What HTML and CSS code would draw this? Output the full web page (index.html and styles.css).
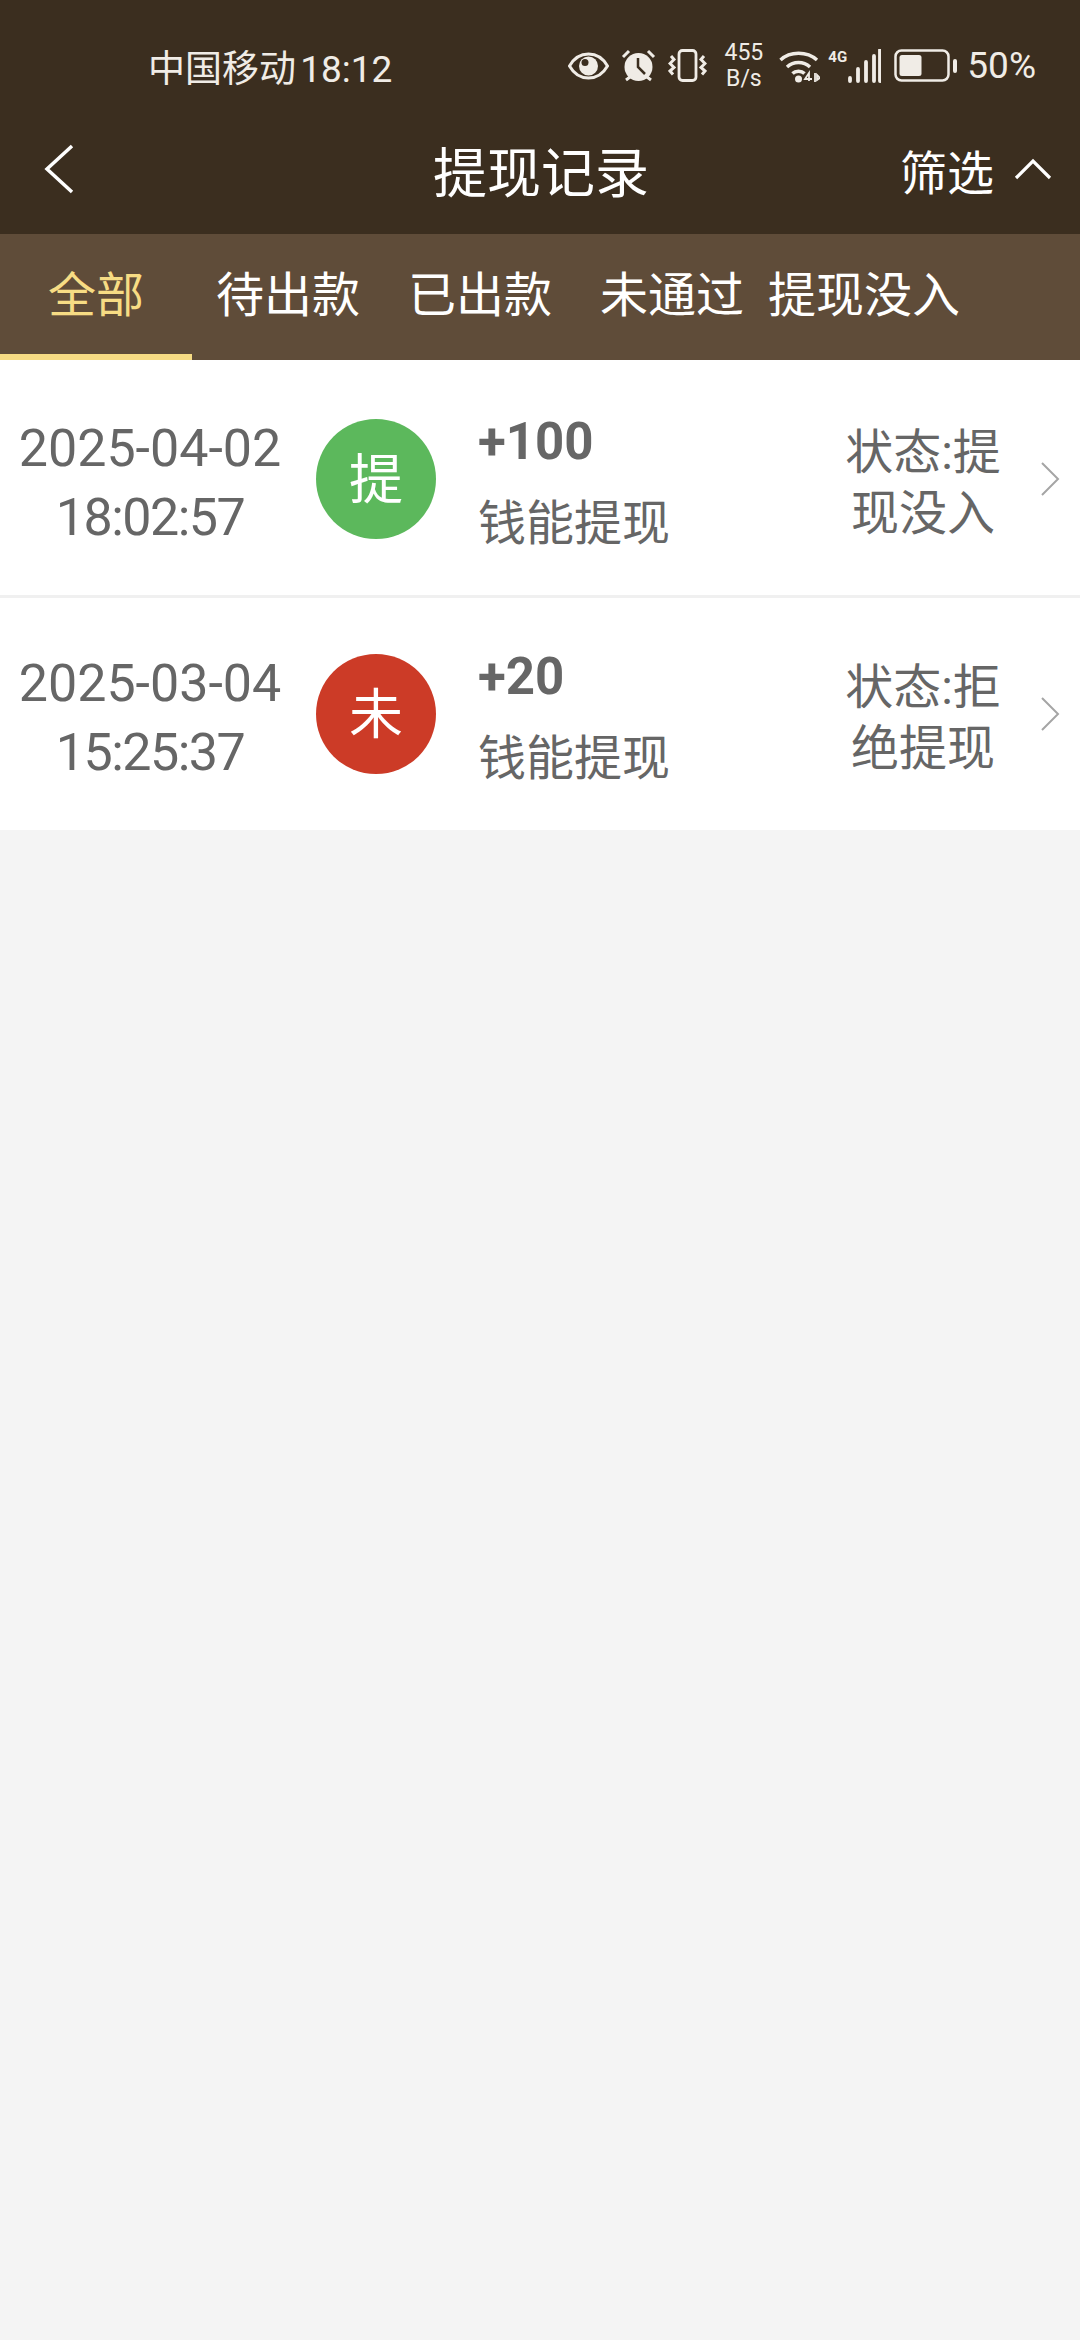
FILE: index.html
```html
<!DOCTYPE html>
<html lang="zh-CN">
<head>
  <meta charset="UTF-8">
  <title>提现记录</title>
  <link rel="stylesheet" href="styles.css">
</head>
<body>

  <!-- 顶部 -->
  <div class="header">
    <div class="statusbar">
      <span class="carrier">中国移动 18:12</span>
      <div class="status-icons">
        <svg class="ic-eye" width="41" height="28" viewBox="0 0 41 28">
          <path d="M1.500 14C6 6 13 2 20.500 2S35 6 39.500 14C35 22 28 26 20.500 26S6 22 1.500 14Z" fill="none" stroke="#f0ece6" stroke-width="3"/>
          <circle cx="20.500" cy="14" r="9.500" fill="#f0ece6"/>
          <circle cx="17" cy="10.500" r="3.500" fill="#3b2e1f"/>
        </svg>
        <svg class="ic-alarm" width="35" height="33" viewBox="0 0 35 33">
          <circle cx="17.500" cy="18" r="14" fill="#f0ece6"/>
          <path d="M17 9V18L24 25" fill="none" stroke="#3b2e1f" stroke-width="2.500"/>
          <path d="M2 8L8 2M33 8L27 2M5 31L9 28M30 31L26 28" stroke="#f0ece6" stroke-width="3" fill="none"/>
        </svg>
        <svg class="ic-vibrate" width="39" height="33" viewBox="0 0 39 33">
          <rect x="11" y="1.500" width="17" height="30" rx="3.500" fill="none" stroke="#f0ece6" stroke-width="2.800"/>
          <path d="M3 7L6 10.500L2 14.500L6 18.500L2 22L5 25.500M36 7L33 10.500L37 14.500L33 18.500L37 22L34 25.500" fill="none" stroke="#f0ece6" stroke-width="3"/>
        </svg>
        <div class="speed">455<br>B/s</div>
        <svg class="ic-wifi" width="41" height="34" viewBox="0 0 41 34">
          <path d="M1.500 11C11 2 28 2 38 11M8 18C14.500 12 24.500 12 31 18M13.500 24.500C16.500 21.500 22.500 21.500 25.500 24.500" fill="none" stroke="#f0ece6" stroke-width="3.500"/>
          <circle cx="19.500" cy="30" r="3.500" fill="#f0ece6"/>
          <path d="M30 32V24L26 30H33M36 24V33M38 26L41 29L38 31Z" fill="none" stroke="#f0ece6" stroke-width="1.800"/>
        </svg>
        <div class="signal">
          <span class="net">4G</span>
          <svg width="34" height="34" viewBox="0 0 34 34">
            <path d="M3 32V29M11 32V20M19 32V13M27 32V7M33 32V1" fill="none" stroke="#f0ece6" stroke-width="3.800" stroke-linecap="round"/>
          </svg>
        </div>
        <svg class="ic-battery" width="64" height="33" viewBox="0 0 64 33">
          <rect x="1.500" y="1.500" width="53" height="30" rx="6" fill="none" stroke="#f0ece6" stroke-width="2.500"/>
          <rect x="5.500" y="6" width="22" height="21" rx="2.500" fill="#f0ece6"/>
          <rect x="59" y="10" width="4" height="14" rx="2" fill="#f0ece6"/>
        </svg>
        <span class="percent">50%</span>
      </div>
    </div>

    <div class="navbar">
      <svg class="back" width="30" height="50" viewBox="0 0 30 50">
        <path d="M28 2L3 25L28 48" fill="none" stroke="#fff" stroke-width="3.500"/>
      </svg>
      <div class="title">提现记录</div>
      <div class="filter">
        <span>筛选</span>
        <svg width="38" height="22" viewBox="0 0 38 22">
          <path d="M2 20L19 3L36 20" fill="none" stroke="#fff" stroke-width="3.200"/>
        </svg>
      </div>
    </div>
  </div>

  <!-- 分类 -->
  <div class="tabs">
    <div class="tab active">全部</div>
    <div class="tab">待出款</div>
    <div class="tab">已出款</div>
    <div class="tab">未通过</div>
    <div class="tab">提现没入</div>
  </div>

  <!-- 记录 -->
  <div class="list">
    <div class="row">
      <div class="date">2025-04-02<br><span class="time">18:02:57</span></div>
      <div class="badge green">提</div>
      <div class="info">
        <div class="amount">+100</div>
        <div class="kind">钱能提现</div>
      </div>
      <div class="state">状态:提<br>现没入</div>
      <svg class="arrow" width="20" height="36" viewBox="0 0 20 36">
        <path d="M2 2L18 18L2 34" fill="none" stroke="#a5a5a5" stroke-width="2"/>
      </svg>
    </div>
    <div class="row">
      <div class="date">2025-03-04<br><span class="time">15:25:37</span></div>
      <div class="badge red">未</div>
      <div class="info">
        <div class="amount">+20</div>
        <div class="kind">钱能提现</div>
      </div>
      <div class="state">状态:拒<br>绝提现</div>
      <svg class="arrow" width="20" height="36" viewBox="0 0 20 36">
        <path d="M2 2L18 18L2 34" fill="none" stroke="#a5a5a5" stroke-width="2"/>
      </svg>
    </div>
  </div>

</body>
</html>
```

FILE: styles.css
```css
* {
  box-sizing: border-box;
}

body {
  margin: 0;
  min-height: 2340px;
  background: #f4f4f4;
  font-family: Roboto, "Noto Sans CJK SC", sans-serif;
}

.header {
  height: 234px;
  background: #3b2e1f;
}

.statusbar {
  height: 100px;
  padding: 31px 44px 0 148px;
  display: flex;
  align-items: center;
  justify-content: space-between;
  color: #f0ece6;
  font-size: 37px;
}

.carrier {
  word-spacing: -5px;
}

.status-icons {
  display: flex;
  align-items: center;
}

.ic-alarm {
  margin-left: 12px;
}

.ic-vibrate {
  margin-left: 12px;
}

.speed {
  margin-left: 18px;
  font-size: 23px;
  line-height: 26px;
  text-align: center;
}

.ic-wifi {
  margin-left: 16px;
}

.signal {
  margin-left: 8px;
  display: flex;
  align-items: flex-start;
}

.net {
  font-size: 15px;
  font-weight: 700;
  line-height: 16px;
  width: 19px;
}

.ic-battery {
  margin-left: 13px;
}

.percent {
  margin-left: 9px;
}

.navbar {
  height: 134px;
  padding: 4px 28px 0 44px;
  display: grid;
  grid-template-columns: 1fr auto 1fr;
  align-items: center;
  color: #fff;
}

.title {
  font-size: 54px;
  margin-right: 14px;
}

.filter {
  display: flex;
  align-items: center;
  justify-content: flex-end;
  gap: 20px;
  font-size: 47px;
}

.tabs {
  height: 126px;
  background: #5f4c39;
  display: flex;
  color: #fff;
  font-size: 48px;
}

.tab {
  height: 126px;
  padding-top: 27px;
  line-height: 70px;
  text-align: center;
  width: 192px;
}

.tab.active {
  color: #f7dc84;
  border-bottom: 6px solid #f7dc84;
}

.list {
  background: #fff;
}

.row {
  height: 238px;
  padding-top: 3px;
  display: flex;
  align-items: center;
  color: #666;
  border-bottom: 3px solid #f0f0f0;
}

.row:last-child {
  height: 232px;
  padding-top: 0;
  border-bottom: none;
}

.date {
  width: 300px;
  padding-top: 7px;
  font-size: 52px;
  line-height: 69px;
  text-align: center;
}

.time {
  letter-spacing: -1.500px;
}

.badge {
  width: 120px;
  height: 120px;
  margin-left: 16px;
  border-radius: 50%;
  color: #fff;
  font-size: 54px;
  line-height: 124px;
  text-align: center;
}

.green {
  background: #5cb85c;
}

.red {
  background: #cc3b27;
}

.info {
  flex: 1;
  margin-left: 42px;
  padding-top: 12px;
}

.amount {
  font-size: 51px;
  font-weight: 700;
  line-height: 60px;
}

.kind {
  font-size: 48px;
  line-height: 70px;
  margin-top: 17px;
}

.state {
  width: 160px;
  padding-top: 8px;
  font-size: 48px;
  line-height: 61px;
  text-align: center;
  white-space: nowrap;
}

.arrow {
  margin-left: 37px;
  margin-right: 20px;
}
```
